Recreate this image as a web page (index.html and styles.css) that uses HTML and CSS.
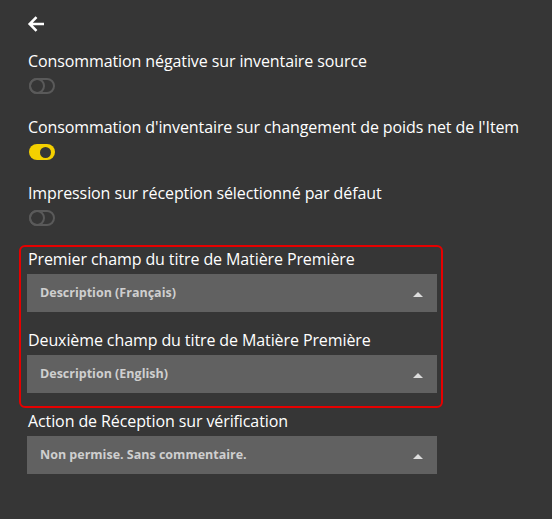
FILE: index.html
```html
<!DOCTYPE html>
<html lang="fr">
<head>
<meta charset="utf-8">
<title>Paramètres</title>
<link rel="stylesheet" href="styles.css">
</head>
<body>
<div class="page">
  <button class="back" aria-label="Retour">
    <svg width="24" height="24" viewBox="0 0 24 24"><path fill="none" stroke="#ffffff" stroke-width="2.6" stroke-linecap="butt" stroke-linejoin="miter" d="M20 12H6.5 M12.5 5.2L5.7 12l6.8 6.8"/></svg>
  </button>

  <div class="setting">
    <div class="label">Consommation négative sur inventaire source</div>
    <span class="toggle off"><span class="knob"></span></span>
  </div>
  <div class="setting">
    <div class="label">Consommation d'inventaire sur changement de poids net de l'Item</div>
    <span class="toggle on"><span class="knob"></span></span>
  </div>
  <div class="setting last">
    <div class="label">Impression sur réception sélectionné par défaut</div>
    <span class="toggle off"><span class="knob"></span></span>
  </div>

  <div class="group">
    <div class="field">
      <div class="label">Premier champ du titre de Matière Première</div>
      <div class="select"><span class="value">Description (Français)</span><span class="caret"></span></div>
    </div>
    <div class="field">
      <div class="label">Deuxième champ du titre de Matière Première</div>
      <div class="select"><span class="value">Description (English)</span><span class="caret"></span></div>
    </div>
  </div>

  <div class="field outside">
    <div class="label">Action de Réception sur vérification</div>
    <div class="select"><span class="value">Non permise. Sans commentaire.</span><span class="caret"></span></div>
  </div>
</div>
</body>
</html>
```

FILE: styles.css
```css
html, body {
  margin: 0;
  padding: 0;
  background: #363636;
}
body {
  font-family: "Open Sans", "Noto Sans", sans-serif;
  color: #ffffff;
  width: 552px;
  height: 519px;
  overflow: hidden;
}
.page {
  padding: 12px 0 0 27px;
}
.back {
  display: block;
  margin: 0 0 15px -3px;
  padding: 0;
  border: 0;
  background: none;
  width: 24px;
  height: 24px;
}
.back svg {
  display: block;
}
.label {
  font-size: 16px;
  letter-spacing: -0.1px;
  line-height: 20px;
  height: 20px;
  white-space: nowrap;
  padding-left: 1px;
}
.setting {
  margin-bottom: 23px;
}
.setting.last {
  margin-bottom: 19px;
}
.toggle {
  position: relative;
  display: block;
  margin: 7px 0 0 2px;
  width: 26px;
  height: 16px;
  border-radius: 8px;
  box-sizing: border-box;
}
.toggle.off {
  border: 2px solid #5a5a5a;
}
.toggle.off .knob {
  position: absolute;
  left: -2px;
  top: -2px;
  width: 16px;
  height: 16px;
  box-sizing: border-box;
  border: 2px solid #5a5a5a;
  border-radius: 50%;
}
.toggle.on {
  background: #f4d000;
}
.toggle.on .knob {
  position: absolute;
  right: 4px;
  top: 2.5px;
  width: 11px;
  height: 11px;
  border-radius: 50%;
  background: #363636;
}
.group {
  margin-left: -8px;
  width: 424px;
  box-sizing: border-box;
  border: 2px solid #e60000;
  border-radius: 6px;
  padding: 2px 5px 13px 6px;
}
.field + .field {
  margin-top: 18px;
}
.field.outside {
  margin-top: 3px;
}
.select {
  margin-top: 5px;
  width: 410px;
  height: 38px;
  background: #616161;
  display: flex;
  align-items: center;
  justify-content: space-between;
  padding: 0 14px 0 13px;
  box-sizing: border-box;
}
.value {
  font-size: 12.5px;
  font-weight: 700;
  color: #cfcfcf;
  line-height: 38px;
}
.caret {
  width: 0;
  height: 0;
  border-left: 5px solid transparent;
  border-right: 5px solid transparent;
  border-bottom: 5px solid #dddddd;
  margin-top: 2px;
}
```
